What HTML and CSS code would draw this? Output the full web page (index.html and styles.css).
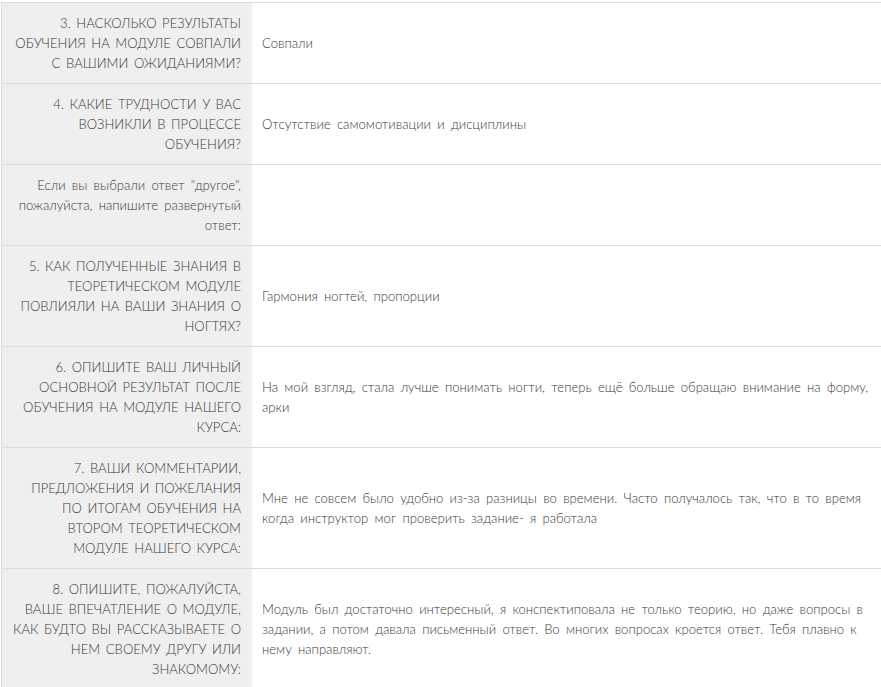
FILE: index.html
```html
<!DOCTYPE html>
<html lang="ru">
<head>
<meta charset="utf-8">
<link rel="stylesheet" href="styles.css">
</head>
<body>
<div class="table">
  <div class="row">
    <div class="q">3. Насколько результаты обучения на модуле совпали с вашими ожиданиями?</div>
    <div class="a">Совпали</div>
  </div>
  <div class="row">
    <div class="q">4. Какие трудности у вас возникли в процессе обучения?</div>
    <div class="a">Отсутствие самомотивации и дисциплины</div>
  </div>
  <div class="row">
    <div class="q plain">Если вы выбрали ответ "другое", пожалуйста, напишите развернутый ответ:</div>
    <div class="a"></div>
  </div>
  <div class="row">
    <div class="q">5. Как полученные знания в теоретическом модуле повлияли на ваши знания о ногтях?</div>
    <div class="a">Гармония ногтей, пропорции</div>
  </div>
  <div class="row">
    <div class="q">6. Опишите ваш личный основной результат после обучения на модуле нашего курса:</div>
    <div class="a">На мой взгляд, стала лучше понимать ногти, теперь ещё больше обращаю внимание на форму, арки</div>
  </div>
  <div class="row">
    <div class="q">7. Ваши комментарии, предложения и пожелания по итогам обучения на втором теоретическом модуле нашего курса:</div>
    <div class="a">Мне не совсем было удобно из-за разницы во времени. Часто получалось так, что в то время когда инструктор мог проверить задание- я работала</div>
  </div>
  <div class="row">
    <div class="q">8. Опишите, пожалуйста, ваше впечатление о модуле, как будто вы рассказываете о нем своему другу или знакомому:</div>
    <div class="a">Модуль был достаточно интересный, я конспектиповала не только теорию, но даже вопросы в задании, а потом давала письменный ответ. Во многих вопросах кроется ответ. Тебя плавно к нему направляют.</div>
  </div>
</div>
</body>
</html>
```

FILE: styles.css
```css
html, body {
  margin: 0;
  padding: 0;
  background: #fff;
}
body {
  font-family: "Lato", "Open Sans", sans-serif;
  font-size: 13.1px;
  font-weight: 300;
  word-spacing: 2.7px;
  line-height: 20px;
  color: #3a3a3a;
}
.table {
  margin: 2px 0 0 1px;
  border-left: 1px solid #dcdcdc;
}
.row {
  display: grid;
  grid-template-columns: 250px 1fr;
  border-top: 1px solid #dcdcdc;
}
.q {
  background: #efefef;
  padding: 10px 11px 10px 7px;
  text-align: right;
  text-transform: uppercase;
  word-spacing: 2px;
}
.q.plain {
  text-transform: none;
  word-spacing: 2.7px;
  padding-left: 10px;
}
.a {
  padding: 10px 10px;
  display: flex;
  align-items: center;
}
```
